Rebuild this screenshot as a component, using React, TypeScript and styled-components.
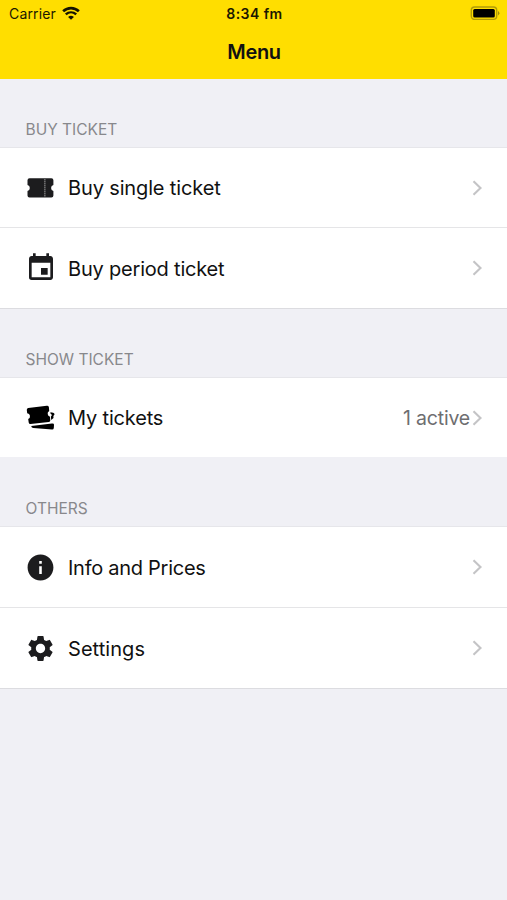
import React from "react";
import styled, { createGlobalStyle } from "styled-components";
import { MdEvent, MdInfo, MdSettings } from "react-icons/md";

const GlobalStyle = createGlobalStyle`
  * { box-sizing: border-box; }
  body { margin: 0; background: #f0f0f5; }
`;

const Screen = styled.div`
  width: 100%;
  min-height: 900px;
  background: #f0f0f5;
  color: #111;
  font-family: Inter, "Liberation Sans", sans-serif;
`;

const Header = styled.header`
  height: 79px;
  background: #ffde00;
  display: flex;
  flex-direction: column;
`;

const StatusBar = styled.div`
  height: 27px;
  padding: 0 7px 0 9px;
  display: grid;
  grid-template-columns: 1fr auto 1fr;
  align-items: center;
  color: #1b1800;
`;

const Carrier = styled.div`
  display: flex;
  align-items: center;
  gap: 5.5px;
  font-size: 14px;
  line-height: 27px;
  letter-spacing: 0.16px;
`;

const Clock = styled.div`
  font-size: 14px;
  font-weight: 600;
  line-height: 27px;
  letter-spacing: 0.45px;
`;

const Battery = styled.div`
  display: flex;
  justify-content: flex-end;
`;

const Title = styled.h1`
  margin: 0;
  height: 52px;
  padding-left: 1px;
  text-align: center;
  font-size: 20px;
  font-weight: 600;
  line-height: 51px;
  letter-spacing: -0.35px;
`;

const SectionTitle = styled.h2<{ $height: number }>`
  margin: 0;
  height: ${(p) => p.$height}px;
  padding: 0 0 8px 25.5px;
  display: flex;
  align-items: flex-end;
  border-bottom: 1px solid #e6e6ea;
  color: #88888c;
  font-size: 15.5px;
  font-weight: 400;
  line-height: 19px;
`;

const Row = styled.div<{ $height: number; $line?: string }>`
  height: ${(p) => p.$height}px;
  padding: 0 24px;
  display: flex;
  align-items: center;
  background: #fff;
  border-bottom: ${(p) => (p.$line ? `1px solid ${p.$line}` : "none")};
`;

const IconSlot = styled.span`
  width: 33px;
  height: 33px;
  display: flex;
  align-items: center;
  justify-content: center;
  color: #1c1c1e;
`;

const Label = styled.span<{ $spacing: number; $shift?: number }>`
  flex: 1;
  padding-left: 11px;
  padding-top: ${(p) => p.$shift ?? 0}px;
  font-size: 20px;
  line-height: 28px;
  letter-spacing: ${(p) => p.$spacing}px;
`;

const Value = styled.span`
  margin-right: 2px;
  padding-top: 1px;
  color: #6e6e70;
  font-size: 19.5px;
  line-height: 28px;
  letter-spacing: -0.2px;
`;

const WifiIcon = () => (
  <svg width="18" height="15" viewBox="0 0 19 15" fill="none" stroke="#171400">
    <path d="M1.2 5.2C6 .7 13 .7 17.8 5.2" strokeWidth="2.8" />
    <path d="M4 8.5C7.2 5.6 11.8 5.6 15 8.5" strokeWidth="2.6" />
    <path d="M9.5 14.2L6.4 11.3Q9.5 8.7 12.6 11.3Z" fill="#171400" stroke="none" />
  </svg>
);

const BatteryIcon = () => (
  <svg width="30" height="15" viewBox="0 0 30 15">
    <rect x="1.3" y="1" width="25.4" height="12.4" rx="3.3" fill="none" stroke="#b19c08" strokeWidth="1.4" />
    <rect x="3.2" y="2.9" width="21.6" height="8.6" rx="1.5" fill="#000" />
    <path d="M28 5.1Q30.8 7.3 28 9.5Z" fill="#a18d08" />
  </svg>
);

const TicketIcon = () => (
  <svg width="27" height="20" viewBox="0 0 27 20">
    <path
      d="M2.5.3H24.4Q26.4.3 26.4 2.3V7A3.1 3.1 0 0 0 26.4 13V17.6Q26.4 19.6 24.4 19.6H2.5Q.5 19.6.5 17.6V13A3.1 3.1 0 0 0 .5 7V2.3Q.5.3 2.5.3Z"
      fill="#1c1c1e"
    />
    <path d="M17.9 1.2V19" stroke="#bbb" strokeWidth="1" strokeDasharray="1.2 .8" />
  </svg>
);

const TicketsIcon = () => (
  <svg width="29" height="26" viewBox="0 0 29 26" fill="#000">
    <path d="M2.2 3L20.8.8Q22.5.6 22.9 2.2L23.2 6A3.1 3.1 0 0 0 24 11.7L24.3 15.4Q24.3 16.7 22.8 16.9L4.5 19.1Q3 19.2 2.7 17.6L2.2 14.1A3.1 3.1 0 0 0 1.2 8.2L.8 5Q.6 3.3 2.2 3Z" />
    <path d="M24.4 7.3L27.2 7.7Q28.7 8 28.5 9.6A3 3 0 0 0 27.5 13L25.2 15L24.9 11.6Q26.9 9.8 24.4 8.4Z" />
    <path d="M5.2 20.9L25.9 18.5Q28.1 18.2 28 19.8L27.8 23.1Q27.6 24.7 26.1 24.6L7.3 23Q5.5 22.7 5.2 20.9Z" />
  </svg>
);

const Chevron = () => (
  <svg width="11" height="16" viewBox="0 0 11 16" fill="none">
    <path d="M1.5 1.2L8.5 8L1.5 14.8" stroke="#c4c4c6" strokeWidth="2.1" />
  </svg>
);

interface MenuItemProps {
  icon: React.ReactNode;
  label: string;
  spacing: number;
  height: number;
  shift?: number;
  value?: string;
  line?: string;
}

const MenuItem = ({ icon, label, spacing, height, shift, value, line }: MenuItemProps) => (
  <Row $height={height} $line={line}>
    <IconSlot>{icon}</IconSlot>
    <Label $spacing={spacing} $shift={shift}>{label}</Label>
    {value && <Value>{value}</Value>}
    <Chevron />
  </Row>
);

export default function App() {
  return (
    <Screen>
      <GlobalStyle />
      <Header>
        <StatusBar>
          <Carrier>
            Carrier
            <WifiIcon />
          </Carrier>
          <Clock>8:34 fm</Clock>
          <Battery>
            <BatteryIcon />
          </Battery>
        </StatusBar>
        <Title>Menu</Title>
      </Header>
      <main>
        <SectionTitle $height={69}>BUY TICKET</SectionTitle>
        <MenuItem icon={<TicketIcon />} label="Buy single ticket" spacing={-0.14} height={80} line="#e5e5e7" />
        <MenuItem icon={<MdEvent size={32} />} label="Buy period ticket" spacing={-0.2} height={81} shift={2} line="#dcdce0" />
        <SectionTitle $height={69}>SHOW TICKET</SectionTitle>
        <MenuItem icon={<TicketsIcon />} label="My tickets" spacing={-0.17} height={79} shift={1} value="1 active" />
        <SectionTitle $height={70}>OTHERS</SectionTitle>
        <MenuItem icon={<MdInfo size={31} />} label="Info and Prices" spacing={-0.27} height={81} shift={1} line="#e5e5e7" />
        <MenuItem icon={<MdSettings size={31} />} label="Settings" spacing={0.06} height={81} shift={1} line="#dcdce0" />
      </main>
    </Screen>
  );
}
